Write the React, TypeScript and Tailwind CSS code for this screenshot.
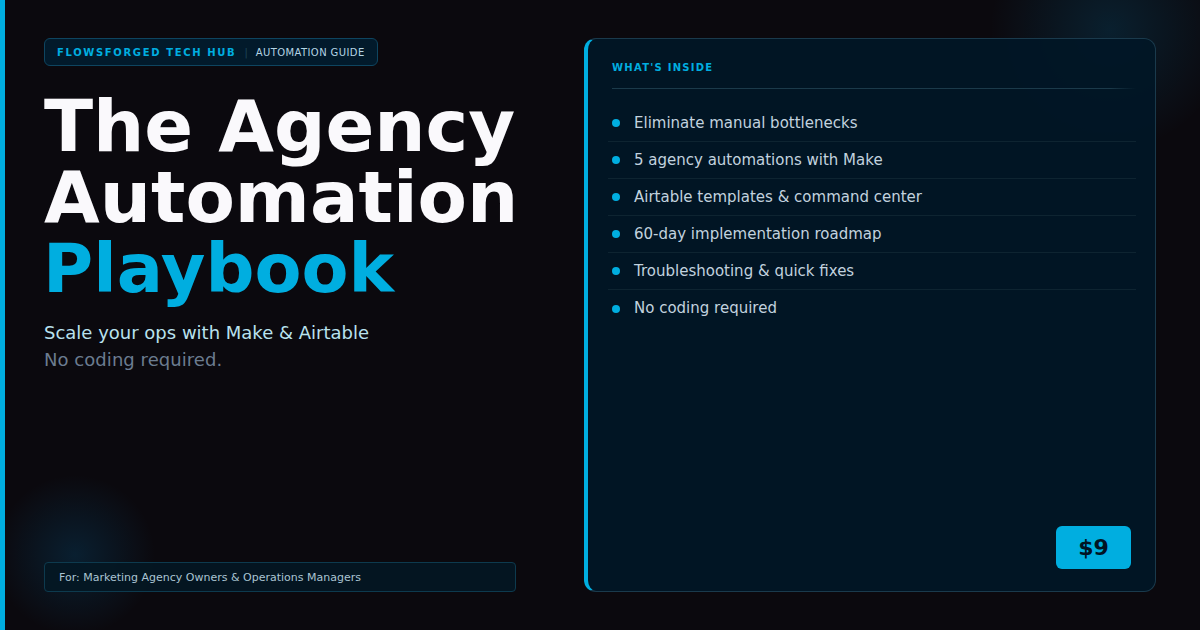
const items = [
  "Eliminate manual bottlenecks",
  "5 agency automations with Make",
  "Airtable templates & command center",
  "60-day implementation roadmap",
  "Troubleshooting & quick fixes",
  "No coding required",
];

export default function App() {
  return (
    <div className="relative flex h-[630px] w-[1200px] overflow-hidden bg-[#0b090e] font-['DejaVu_Sans',sans-serif]">
      <div className="absolute left-[-5px] top-[475px] h-[160px] w-[160px] bg-[radial-gradient(closest-side,rgba(0,140,215,0.17),rgba(0,140,215,0))]" />
      <div className="absolute right-[-30px] top-[-90px] h-[240px] w-[240px] bg-[radial-gradient(closest-side,rgba(0,150,215,0.16),rgba(0,150,215,0))]" />
      <div className="relative w-[5px] shrink-0 bg-[#00aee0]" />
      <div className="relative flex w-[579px] shrink-0 flex-col pb-[38px] pl-[39px] pr-[68px] pt-[38px]">
        <div className="flex h-[28px] w-[334px] items-center whitespace-nowrap rounded-md border border-[#0e4560] bg-[#021a2b] pl-3">
          <span className="text-[10px] font-bold tracking-[1.65px] text-[#00aee0]">FLOWSFORGED TECH HUB</span>
          <span className="ml-2 mr-2 text-[10px] text-[#1f4558]">|</span>
          <span className="text-[10px] tracking-[0.4px] text-[#b3d4e4]">AUTOMATION GUIDE</span>
        </div>
        <h1 className="mt-[25px] text-[72px] font-bold leading-[71px] text-[#faf9fc]">
          <div>The Agency</div>
          <div>Automation</div>
          <div className="-ml-px text-[68.5px] leading-[70px] text-[#00aee0]">Playbook</div>
        </h1>
        <p className="mt-[16px] text-[18px] leading-[27px] text-[#b9e2ee]">Scale your ops with Make &amp; Airtable</p>
        <p className="text-[18px] leading-[27px] tracking-[0.05px] text-[#6b7c90]">No coding required.</p>
        <div className="mt-auto flex h-[30px] w-[472px] items-center rounded border border-[#0d3a4e] bg-[#031724]/90 pl-[14px]">
          <span className="pt-[2px] text-[11px] text-[#aac4d2]">For: Marketing Agency Owners &amp; Operations Managers</span>
        </div>
      </div>
      <div className="relative my-[38px] flex w-[572px] shrink-0 flex-col rounded-xl border border-l-4 border-[#1a3a4c] border-l-[#00aee0] bg-[#011626]/95 pb-[22px] pl-[24px] pr-[19px] pt-[21px]">
        <div className="pb-[13px] text-[10px] font-bold leading-[15px] tracking-[1.26px] text-[#00aee0]">WHAT'S INSIDE</div>
        <div className="h-px bg-gradient-to-r from-[#1b3a4a] from-95% to-transparent" />
        <ul className="-ml-1 mt-[16px] flex flex-col">
          {items.map((t, i) => (
            <li key={t} className={`flex h-[37px] items-center gap-[14px] pl-1 text-[15px] text-[#c2d2df] ${i < items.length - 1 ? "border-b border-[#0e2431]" : ""}`}>
              <span className="h-2 w-2 rounded-full bg-[#00aee0]" />
              {t}
            </li>
          ))}
        </ul>
        <div className="mr-[5px] mt-auto flex h-[43px] w-[75px] items-center justify-center self-end rounded-md bg-[#00aee0] text-[22px] font-bold text-[#011424]">$9</div>
      </div>
    </div>
  );
}
